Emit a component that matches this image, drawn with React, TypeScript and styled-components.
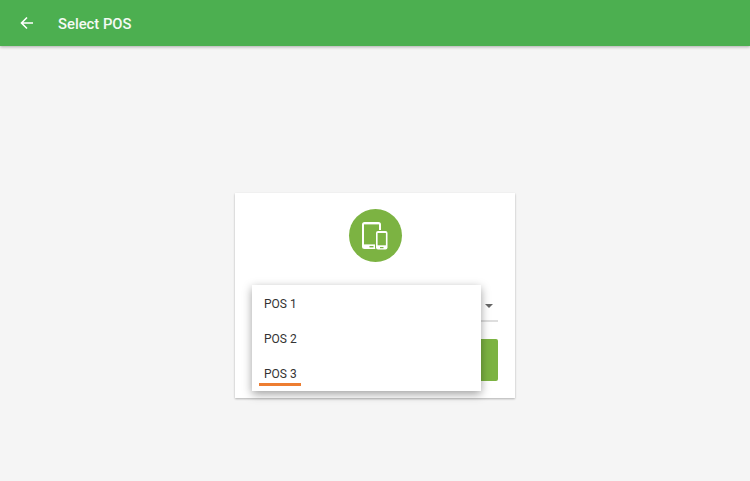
import React from "react";
import styled, { createGlobalStyle } from "styled-components";

const GlobalStyle = createGlobalStyle`
  html, body {
    margin: 0;
    padding: 0;
    height: 100%;
    background: #f5f5f5;
    font-family: Roboto, "Liberation Sans", sans-serif;
  }
`;

const Page = styled.div`
  width: 750px;
  height: 481px;
  overflow: hidden;
  background: #f5f5f5;
`;

const Header = styled.header`
  height: 46px;
  display: flex;
  align-items: center;
  padding-left: 19px;
  gap: 23px;
  background: #4caf50;
  box-shadow: 0 1px 3px rgba(0, 0, 0, 0.3);
`;

const BackIcon = styled.svg`
  width: 16px;
  height: 16px;
  display: block;
  fill: none;
  stroke: #fff;
  stroke-width: 1.6;
`;

const Title = styled.h1`
  margin: 2px 0 0;
  font-size: 14.8px;
  font-weight: 500;
  color: #f4faf4;
`;

const Main = styled.main`
  display: flex;
  justify-content: center;
  padding-top: 147px;
`;

const Card = styled.section`
  position: relative;
  box-sizing: border-box;
  width: 280px;
  height: 205px;
  padding: 16px 17px 0;
  background: #fff;
  box-shadow: 0 1px 2px rgba(0, 0, 0, 0.28);
  display: flex;
  flex-direction: column;
`;

const Badge = styled.div`
  width: 53px;
  height: 53px;
  align-self: center;
  border-radius: 50%;
  background: #7cb342;
  display: flex;
  align-items: center;
  justify-content: center;
`;

const DeviceIcon = styled.svg`
  width: 26px;
  height: 28px;
  display: block;
`;

const SelectField = styled.div`
  height: 38px;
  margin-top: 22px;
  margin-bottom: 17px;
  display: flex;
  align-items: center;
  justify-content: flex-end;
  padding-right: 5px;
  padding-top: 7px;
  box-sizing: border-box;
  border-bottom: 2px solid #dedede;
`;

const Caret = styled.span`
  width: 0;
  height: 0;
  border-left: 4px solid transparent;
  border-right: 4px solid transparent;
  border-top: 4px solid #666;
`;

const SubmitButton = styled.div`
  height: 42px;
  background: #7cb342;
  border-radius: 2px;
`;

const Menu = styled.ul`
  position: absolute;
  left: 17px;
  top: 92px;
  width: 229px;
  height: 106px;
  margin: 0;
  padding: 0;
  list-style: none;
  background: #fff;
  box-shadow: 0 3px 9px rgba(0, 0, 0, 0.38);
  display: flex;
  flex-direction: column;
`;

const MenuItem = styled.li`
  position: relative;
  height: 35.5px;
  padding: 2px 0 0 12px;
  box-sizing: border-box;
  display: flex;
  align-items: center;
  font-size: 12px;
  color: #333;
`;

const Marker = styled.span`
  position: absolute;
  left: 7px;
  top: 27px;
  width: 42px;
  height: 3px;
  background: #ed7d31;
`;

export default function App() {
  return (
    <Page>
      <GlobalStyle />
      <Header>
        <BackIcon viewBox="0 0 16 16">
          <path d="M14 8H2.5M8 2.5 2.5 8 8 13.5" />
        </BackIcon>
        <Title>Select POS</Title>
      </Header>
      <Main>
        <Card>
          <Badge>
            <DeviceIcon viewBox="0 0 26 28">
              <rect x="0" y="0" width="19" height="27" rx="2.5" fill="#fff" />
              <rect x="2" y="2.4" width="15" height="20" fill="#7cb342" />
              <rect x="7.5" y="24" width="4" height="1.4" fill="#7cb342" />
              <rect x="13" y="8" width="13" height="20" rx="2.5" fill="#7cb342" />
              <rect x="14" y="9" width="11.5" height="18.5" rx="2" fill="#fff" />
              <rect x="15.6" y="11" width="8.3" height="12.3" fill="#7cb342" />
              <rect x="18" y="25" width="3.5" height="1.2" fill="#7cb342" />
            </DeviceIcon>
          </Badge>
          <SelectField>
            <Caret />
          </SelectField>
          <SubmitButton />
          <Menu>
            <MenuItem>POS 1</MenuItem>
            <MenuItem>POS 2</MenuItem>
            <MenuItem>
              POS 3
              <Marker />
            </MenuItem>
          </Menu>
        </Card>
      </Main>
    </Page>
  );
}
